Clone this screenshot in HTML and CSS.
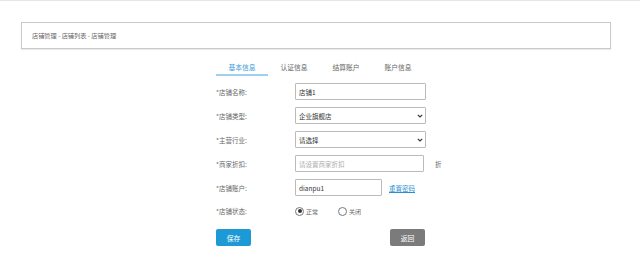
FILE: index.html
```html
<!DOCTYPE html>
<html lang="zh">
<head>
<meta charset="utf-8">
<title>店铺管理</title>
<link rel="stylesheet" href="styles.css">
</head>
<body>
<div class="page">
  <div class="crumb">店铺管理 - 店铺列表 - 店铺管理</div>
  <div class="main">
    <div class="tabs">
      <div class="tab active">基本信息</div>
      <div class="tab">认证信息</div>
      <div class="tab">结算账户</div>
      <div class="tab">账户信息</div>
    </div>
    <form class="form">
      <div class="row">
        <label class="label">*店铺名称:</label>
        <input class="field" type="text" value="店铺1">
      </div>
      <div class="row">
        <label class="label">*店铺类型:</label>
        <div class="select">
          <select class="field"><option>企业旗舰店</option></select>
          <svg class="chev" width="6" height="4" viewBox="0 0 6 4"><path d="M0.8 0.8 L3 3 L5.2 0.8" fill="none" stroke="#333" stroke-width="1.1"/></svg>
        </div>
      </div>
      <div class="row">
        <label class="label">*主营行业:</label>
        <div class="select">
          <select class="field"><option>请选择</option></select>
          <svg class="chev" width="6" height="4" viewBox="0 0 6 4"><path d="M0.8 0.8 L3 3 L5.2 0.8" fill="none" stroke="#333" stroke-width="1.1"/></svg>
        </div>
      </div>
      <div class="row">
        <label class="label">*商家折扣:</label>
        <input class="field discount" type="text" placeholder="请设置商家折扣">
        <span class="unit">折</span>
      </div>
      <div class="row">
        <label class="label">*店铺账户:</label>
        <input class="field short" type="text" value="dianpu1">
        <a class="reset" href="#">重置密码</a>
      </div>
      <div class="row radio-row">
        <label class="label">*店铺状态:</label>
        <span class="radio checked"></span><span class="rtext">正常</span>
        <span class="radio off"></span><span class="rtext">关闭</span>
      </div>
      <div class="buttons">
        <button type="button" class="btn save">保存</button>
        <button type="button" class="btn back">返回</button>
      </div>
    </form>
  </div>
</div>
</body>
</html>
```
FILE: styles.css
```css
html, body {
  margin: 0;
  padding: 0;
  background: #fff;
}
body {
  font-family: "Noto Sans CJK SC", "Liberation Sans", sans-serif;
  color: #555;
  border-top: 1px solid #e6e6e6;
}
.page {
  padding-top: 21px;
}
.crumb {
  margin-left: 21px;
  width: 578px;
  height: 25px;
  border: 1px solid #c9c9c9;
  box-shadow: 0 1px 1px rgba(0,0,0,0.08);
  padding-left: 10px;
  font-size: 6.2px;
  line-height: 25px;
  color: #666;
}
.main {
  margin-left: 216px;
  width: 230px;
  padding-top: 13px;
}
.tabs {
  display: flex;
  width: 208px;
}
.tab {
  width: 52px;
  text-align: center;
  font-size: 6.8px;
  color: #666;
  height: 12px;
  line-height: 10px;
  border-bottom: 2px solid transparent;
}
.tab.active {
  color: #3a9ad6;
  border-bottom-color: #9fd0ef;
}
.form {
  margin: 0;
  padding-top: 7px;
  display: flex;
  flex-direction: column;
  gap: 7px;
}
.row {
  display: flex;
  align-items: center;
  height: 17px;
}
.label {
  width: 79px;
  flex: none;
  font-size: 6.5px;
  color: #666;
}
.field {
  display: block;
  box-sizing: border-box;
  width: 131px;
  height: 17px;
  border: 1px solid #bbb;
  border-radius: 1px;
  padding: 0 0 0 3px;
  margin: 0;
  font-family: "Noto Sans CJK SC", "Liberation Sans", sans-serif;
  font-size: 6.5px;
  color: #333;
  background: #fff;
  outline: none;
}
.field::placeholder {
  color: #aaa;
}
.discount {
  width: 129px;
}
.short {
  width: 87px;
}
.select {
  position: relative;
  width: 131px;
  height: 17px;
}
.select select {
  appearance: none;
  -webkit-appearance: none;
}
.chev {
  position: absolute;
  right: 3px;
  top: 7px;
}
.unit {
  margin-left: 11px;
  font-size: 6.5px;
  color: #666;
}
.reset {
  margin-left: 7px;
  font-size: 6.5px;
  color: #2a8fd0;
  text-decoration: underline;
}
.radio-row {
  margin-top: 2px;
  height: 12px;
}
.radio {
  box-sizing: border-box;
  width: 9px;
  height: 9px;
  border: 1px solid #777;
  border-radius: 50%;
  display: flex;
  align-items: center;
  justify-content: center;
  background: #fff;
}
.radio.checked::after {
  content: "";
  width: 4px;
  height: 4px;
  border-radius: 50%;
  background: #333;
}
.rtext {
  font-size: 6px;
  color: #666;
  margin-left: 2px;
  width: 32px;
}
.buttons {
  display: flex;
  justify-content: space-between;
  width: 209px;
  margin-top: 5px;
}
.btn {
  width: 35px;
  height: 17px;
  border: none;
  border-radius: 2px;
  color: #fff;
  font-family: "Noto Sans CJK SC", "Liberation Sans", sans-serif;
  font-size: 6.8px;
  padding: 0;
}
.save {
  background: #1d9ad6;
}
.back {
  background: #7b7b7b;
}
```
